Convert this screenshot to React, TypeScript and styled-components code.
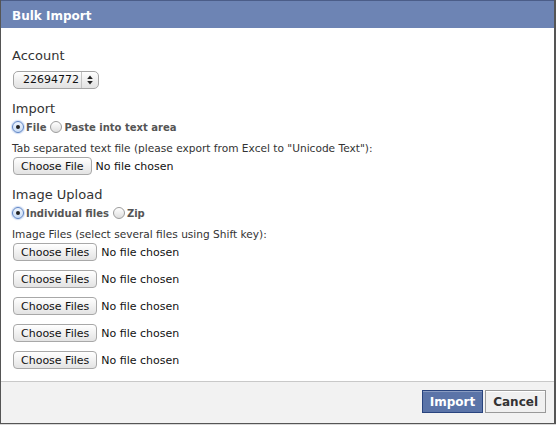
import React from "react";
import styled, { createGlobalStyle } from "styled-components";

const Global = createGlobalStyle`
  html, body { margin: 0; padding: 0; background: #d9d9d9; }
  body { font-family: "DejaVu Sans", "Lucida Grande", Verdana, sans-serif; }
  * { box-sizing: border-box; }
`;

const Dialog = styled.div`
  width: 556px;
  height: 424px;
  display: flex;
  flex-direction: column;
  background: #fff;
  border-left: 1px solid #555;
  border-right: 2px solid #555;
  border-bottom: 1px solid #555;
`;

const TitleBar = styled.div`
  height: 28px;
  background: #6d84b4;
  border-top: 1px solid #4b5d88;
  color: #fff;
  font-weight: bold;
  font-size: 12px;
  line-height: 27px;
  padding: 2px 0 0 11px;
`;

const Body = styled.div`
  flex: 1;
  display: flex;
  flex-direction: column;
  padding: 20px 11px 12px 11px;
  color: #333;
`;

const Header = styled.div<{ $mt?: number }>`
  font-size: 13px;
  line-height: 16px;
  height: 16px;
  color: #333;
  margin-top: ${(p) => p.$mt ?? 0}px;
`;

const SelectBox = styled.div`
  margin: 7px 0 0 1px;
  width: 86px;
  height: 18px;
  display: flex;
  align-items: stretch;
  border: 1px solid #a5a5a5;
  border-radius: 5px;
  background: linear-gradient(#ffffff, #ececec 60%, #e2e2e2);
  font-size: 11px;
  color: #111;
`;

const SelectValue = styled.div`
  flex: 1;
  padding-left: 9px;
  line-height: 16px;
`;

const SelectArrows = styled.div`
  width: 17px;
  border-left: 1px solid #c4c4c4;
  display: flex;
  align-items: center;
  justify-content: center;
`;

const RadioRow = styled.div`
  margin-top: 3px;
  height: 14px;
  display: flex;
  align-items: center;
  font-size: 10px;
  font-weight: bold;
  color: #555;
`;

const RadioCircle = styled.span<{ $on?: boolean }>`
  width: 12px;
  height: 12px;
  border-radius: 50%;
  margin-right: 2px;
  display: inline-flex;
  align-items: center;
  justify-content: center;
  border: 1px solid ${(p) => (p.$on ? "#5c83c4" : "#9c9c9c")};
  background: ${(p) =>
    p.$on
      ? "linear-gradient(#eef4fd, #c9dcf5)"
      : "linear-gradient(#ffffff, #dedede)"};
  box-shadow: ${(p) => (p.$on ? "0 0 1px 1px rgba(110,150,220,0.35)" : "none")};
  &::after {
    content: "";
    display: ${(p) => (p.$on ? "block" : "none")};
    width: 4px;
    height: 4px;
    border-radius: 50%;
    background: #222;
  }
`;

const RadioLabel = styled.span`
  margin-right: 4px;
`;

const Hint = styled.div`
  margin-top: 7px;
  height: 14px;
  font-size: 10.6px;
  line-height: 14px;
  color: #333;
`;

const FileRow = styled.div<{ $mt: number }>`
  margin: ${(p) => p.$mt}px 0 0 1px;
  height: 18px;
  display: flex;
  align-items: center;
`;

const FileButton = styled.div`
  height: 18px;
  padding: 0 7px;
  display: flex;
  align-items: center;
  border: 1px solid #a8a8a8;
  border-radius: 4px;
  background: linear-gradient(#ffffff, #f1f1f1 50%, #e3e3e3);
  font-size: 11px;
  color: #111;
`;

const FileStatus = styled.span`
  margin-left: 4px;
  font-size: 11px;
  color: #111;
`;

const Footer = styled.div`
  height: 42px;
  border-top: 1px solid #c9c9c9;
  background: #f2f2f2;
  display: flex;
  justify-content: flex-end;
  align-items: flex-start;
  gap: 2px;
  padding: 8px 8px 0 0;
`;

const Btn = styled.div<{ $primary?: boolean }>`
  height: 23px;
  padding: 0 7px;
  display: flex;
  align-items: center;
  font-size: 12px;
  font-weight: bold;
  border: 1px solid ${(p) => (p.$primary ? "#29447e" : "#999")};
  background: ${(p) => (p.$primary ? "#5b74a8" : "#f0f0f0")};
  color: ${(p) => (p.$primary ? "#fff" : "#333")};
  box-shadow: ${(p) =>
    p.$primary ? "inset 0 1px 0 #8a9cc2" : "inset 0 1px 0 #fff"};
`;

function FileInput({ label, mt }: { label: string; mt: number }) {
  return (
    <FileRow $mt={mt}>
      <FileButton>{label}</FileButton>
      <FileStatus>No file chosen</FileStatus>
    </FileRow>
  );
}

export default function App() {
  return (
    <>
      <Global />
      <Dialog>
        <TitleBar>Bulk Import</TitleBar>
        <Body>
          <Header>Account</Header>
          <SelectBox>
            <SelectValue>22694772</SelectValue>
            <SelectArrows>
              <svg width="6" height="10" viewBox="0 0 6 10">
                <path d="M3 0.5 L5.8 4 L0.2 4 Z" fill="#222" />
                <path d="M3 9.5 L5.8 6 L0.2 6 Z" fill="#222" />
              </svg>
            </SelectArrows>
          </SelectBox>

          <Header $mt={12}>Import</Header>
          <RadioRow>
            <RadioCircle $on />
            <RadioLabel>File</RadioLabel>
            <RadioCircle />
            <RadioLabel>Paste into text area</RadioLabel>
          </RadioRow>
          <Hint>Tab separated text file (please export from Excel to "Unicode Text"):</Hint>
          <FileInput label="Choose File" mt={2} />

          <Header $mt={12}>Image Upload</Header>
          <RadioRow>
            <RadioCircle $on />
            <RadioLabel>Individual files</RadioLabel>
            <RadioCircle />
            <RadioLabel>Zip</RadioLabel>
          </RadioRow>
          <Hint>Image Files (select several files using Shift key):</Hint>
          <FileInput label="Choose Files" mt={2} />
          <FileInput label="Choose Files" mt={9} />
          <FileInput label="Choose Files" mt={9} />
          <FileInput label="Choose Files" mt={9} />
          <FileInput label="Choose Files" mt={9} />
        </Body>
        <Footer>
          <Btn $primary>Import</Btn>
          <Btn>Cancel</Btn>
        </Footer>
      </Dialog>
    </>
  );
}
